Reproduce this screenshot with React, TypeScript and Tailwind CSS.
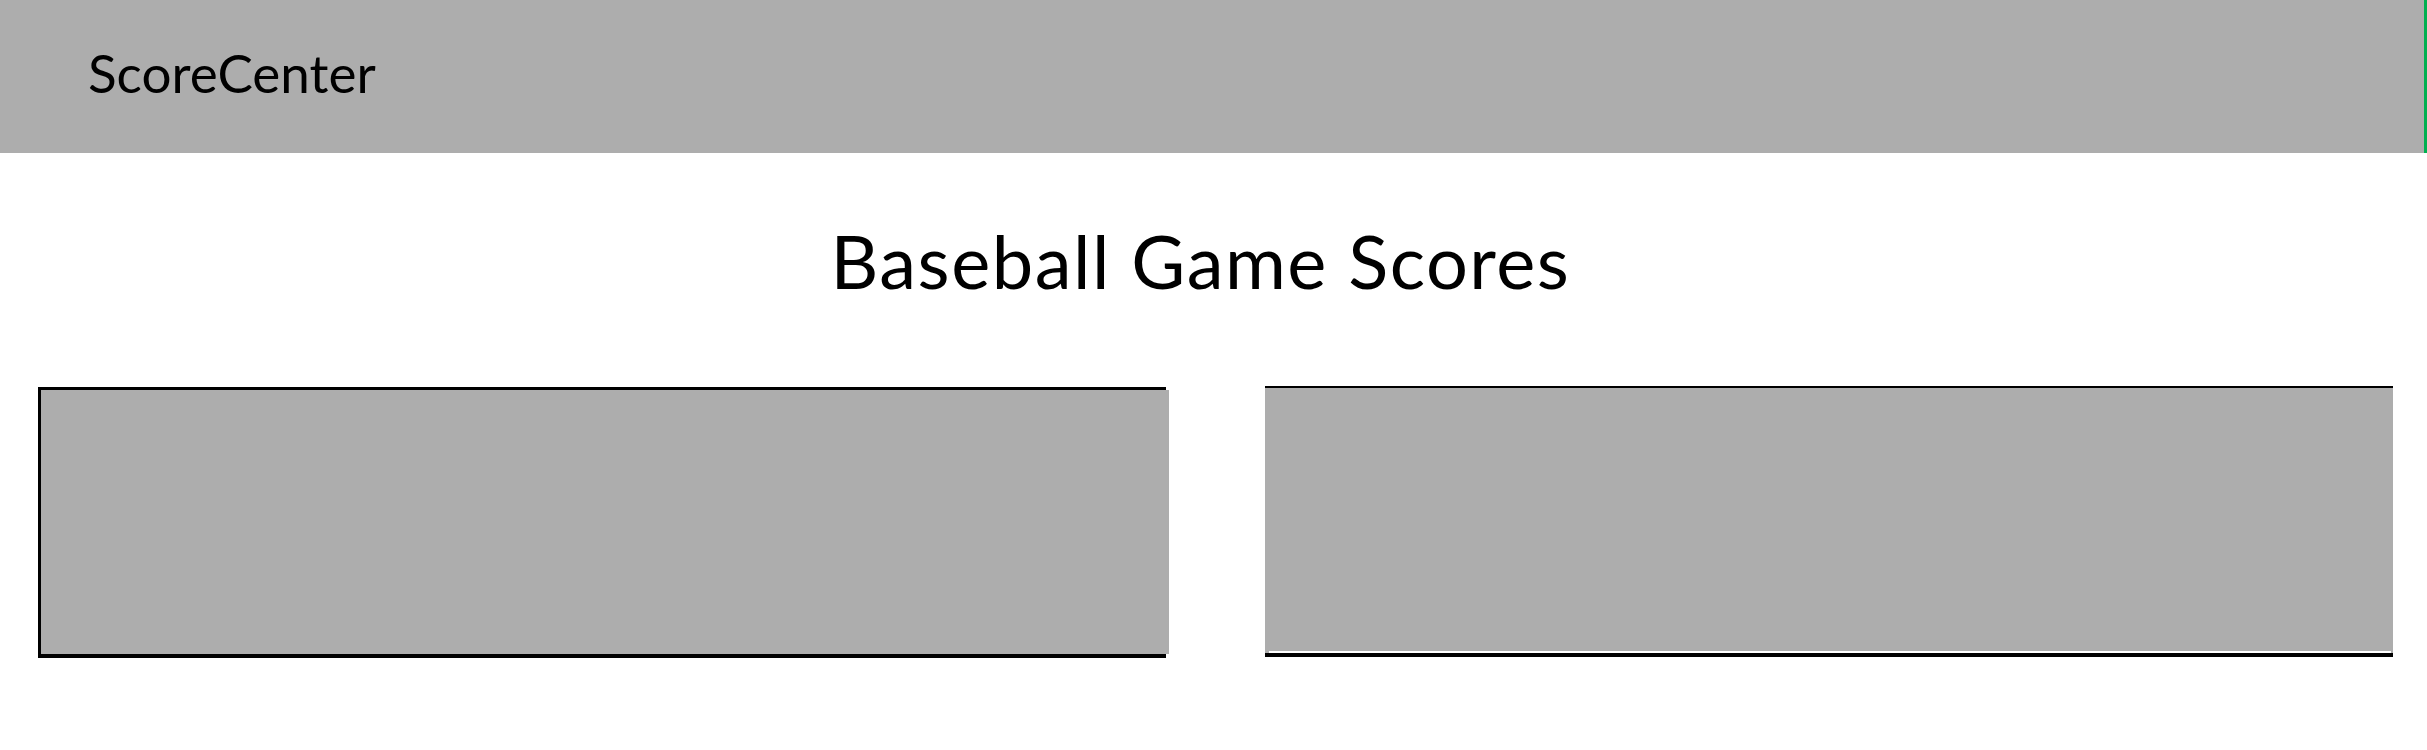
import React from "react";

export default function App() {
  return (
    <div className="w-[2427px] h-[750px] bg-white overflow-hidden" style={{ fontFamily: "Lato, 'Open Sans', sans-serif" }}>
      <header className="h-[153px] bg-[#adadad] border-r-[3px] border-[#00b050] flex items-center pl-[88px]">
        <span className="text-[53px] leading-none text-black pb-[8px]">ScoreCenter</span>
      </header>
      <h1 className="text-center text-[74px] leading-none tracking-[1.5px] text-black mt-[71px] pr-[26px]">Baseball Game Scores</h1>
      <div className="flex justify-between items-start pl-[38px] pr-[34px] mt-[88px]">
        <div className="w-[1128px] h-[271px] mt-[1px] border-t-[3px] border-l-[3px] border-b-[4px] border-black flex">
          <div className="flex-1 bg-[#adadad] mr-[-3px]" />
        </div>
        <div className="w-[1128px] h-[271px] border-t-[2px] border-b-[4px] border-black bg-[#adadad] flex flex-col">
          <div className="flex-1" />
          <div className="h-[2px] bg-white ml-[4px] mr-[2px]" />
        </div>
      </div>
    </div>
  );
}
